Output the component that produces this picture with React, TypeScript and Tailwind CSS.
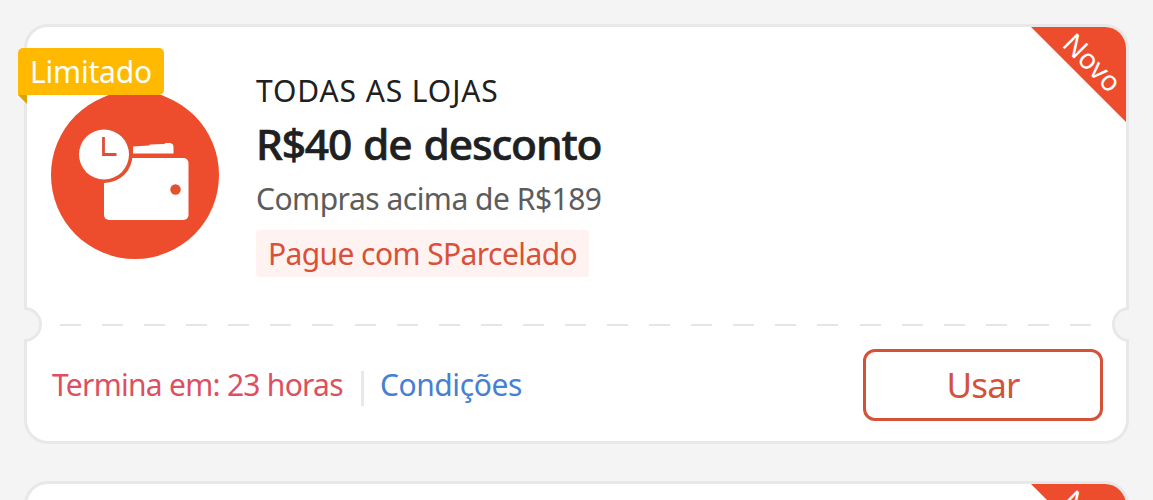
import React from "react"

interface Voucher {
  id: number
  store: string
  title: string
  minimum: string
  payment: string
  expires: string
}

const vouchers: Voucher[] = [
  {
    id: 1,
    store: "TODAS AS LOJAS",
    title: "R$40 de desconto",
    minimum: "Compras acima de R$189",
    payment: "Pague com SParcelado",
    expires: "Termina em: 23 horas",
  },
]

const WalletIcon = () => (
  <svg viewBox="0 0 168 168" className="block size-[168px]">
    <circle cx="84" cy="84" r="84" fill="#ee4d2d" />
    {/* banknote */}
    <path d="M82 55.500 L98 54.500 L99 53.500 L113 53 L115 52 H119 Q122.500 52.500 122.500 56 V62.500 H82 Z" fill="#fff" />
    {/* wallet */}
    <rect x="53" y="67" width="84.500" height="62" rx="5" fill="#fff" />
    <circle cx="124.500" cy="98.500" r="5.200" fill="#e5502f" />
    {/* clock */}
    <circle cx="53.500" cy="64" r="28" fill="#e5502f" />
    <path d="M53 36 A28 28 0 1 0 53 92 Z" fill="#ee4d2d" />
    <circle cx="53" cy="63.500" r="25" fill="#fff" />
    <path d="M52.500 46 V63.500 H65.500" fill="none" stroke="#dc4f38" strokeWidth="2.800" />
  </svg>
)

const Ribbon = () => (
  <div className="absolute inset-0 overflow-hidden rounded-[21px] pointer-events-none">
    <div className="absolute top-0 right-0 size-[95px] bg-[#ee4d2d] [clip-path:polygon(0_0,100%_0,100%_100%)]">
      <span className="absolute left-[61.5px] top-[35px] -translate-x-1/2 -translate-y-1/2 rotate-45 text-[28px] leading-none text-white">
        Novo
      </span>
    </div>
  </div>
)

const VoucherCard = ({ voucher }: { voucher: Voucher }) => {
  return (
    <div className="relative h-[420px] rounded-3xl border-3 border-[#e8e8e8] bg-white">
      <Ribbon />

      {/* LIMITED TAG */}
      <div className="absolute -left-[9px] top-[21px] flex h-[47px] w-[146px] items-center justify-center rounded-[5px] rounded-bl-none bg-[#ffb900] text-[30px] tracking-[-0.2px] text-white z-10">
        Limitado
        <span className="absolute left-0 top-full h-[9px] w-[9px] bg-[#dca30a] [clip-path:polygon(0_0,100%_0,100%_100%)]" />
      </div>

      {/* VOUCHER INFO */}
      <div className="flex h-[298px] pl-6">
        <div className="pt-[64px]">
          <WalletIcon />
        </div>
        <div className="flex flex-col items-start pl-[37px] pt-[42px] whitespace-nowrap">
          <p className="h-11 text-[30px] leading-11 tracking-[0.9px] text-[#202020]">{voucher.store}</p>
          <h2 className="h-[62px] text-[42.5px] leading-[62px] font-medium tracking-[-1.15px] [word-spacing:2px] text-[#202020] [-webkit-text-stroke:0.6px_#202020]">
            {voucher.title}
          </h2>
          <p className="h-12 text-[30px] leading-12 tracking-[-0.5px] text-[#5c5c5c]">{voucher.minimum}</p>
          <p className="mt-[7px] flex h-[47px] w-[333px] items-center justify-center rounded-[3px] bg-[#fff3f1] text-[30px] tracking-[-0.58px] text-[#d85138]">
            {voucher.payment}
          </p>
        </div>
      </div>

      {/* PERFORATION */}
      <div className="absolute -left-[3px] top-[280px] h-[35px] w-[18px] rounded-r-full border-3 border-l-0 border-[#e8e8e8] bg-[#f4f4f4]" />
      <div className="absolute -right-[3px] top-[280px] h-[35px] w-[17px] rounded-l-full border-3 border-r-0 border-[#e8e8e8] bg-[#f4f4f4]" />
      <div className="mx-[33px] -mt-px h-[2px] bg-[repeating-linear-gradient(90deg,#e5e5e5_0_21px,transparent_21px_42.08px)]" />

      {/* FOOTER */}
      <div className="flex h-[115px] items-center justify-between pl-[25px] pr-[23px] pt-[3px]">
        <div className="flex items-center whitespace-nowrap text-[30px]">
          <span className="-mt-[2px] tracking-[-0.73px] text-[#dd5060]">{voucher.expires}</span>
          <span className="ml-[18px] mr-4 mt-[6px] h-[35px] w-[3px] bg-[#e8e8e8]" />
          <a className="-mt-[2px] tracking-[-0.4px] text-[#4680d3]">Condições</a>
        </div>
        <button className="h-[72px] w-[240px] rounded-xl border-3 border-[#d35238] pb-[2px] text-[35px] leading-none tracking-[-0.8px] text-[#d35238]">
          Usar
        </button>
      </div>
    </div>
  )
}

const App = () => {
  return (
    <div className="h-[500px] w-full overflow-hidden bg-[#f4f4f4] px-6 pt-6 font-['Noto_Sans',sans-serif]">
      <div className="flex flex-col gap-[37px]">
        {vouchers.map(voucher => (
          <VoucherCard key={voucher.id} voucher={voucher} />
        ))}

        {/* next voucher in the list */}
        <div className="relative h-[420px] rounded-3xl border-3 border-[#e8e8e8] bg-white">
          <Ribbon />
        </div>
      </div>
    </div>
  )
}

export default App
